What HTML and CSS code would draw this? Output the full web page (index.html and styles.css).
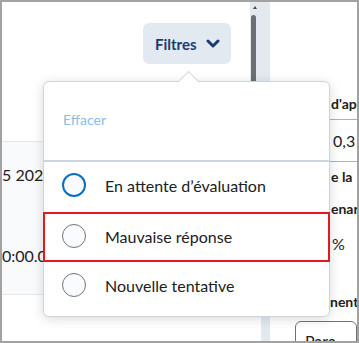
FILE: index.html
```html
<!DOCTYPE html>
<html>
<head>
  <link rel="stylesheet" href="styles.css">
</head>
<body>
  <div class="frame">
    <div class="main">
      <div class="toolbar">
        <button class="filter-btn">
          <span>Filtres</span>
          <svg width="14" height="10" viewBox="0 0 14 10"><path d="M2 2 L7 7 L12 2" fill="none" stroke="#1b3b6f" stroke-width="3" stroke-linecap="round" stroke-linejoin="round"/></svg>
        </button>
      </div>
      <div class="list">
        <div class="list-date">5 2025</div>
        <div class="list-time">0:00.000</div>
      </div>
    </div>

    <div class="scroll">
      <div class="scroll-arrow"></div>
      <div class="scroll-thumb"></div>
    </div>
    <div class="divider"></div>

    <div class="side">
      <div class="side-head">d'ap</div>
      <div class="side-value">0,3</div>
      <div class="side-label first">e la</div>
      <div class="side-label second">enar</div>
      <div class="side-pct">%</div>
      <div class="side-label third">nent</div>
      <div class="side-select">Para</div>
    </div>

    <div class="dropdown">
      <div class="pointer"></div>
      <div class="clear">Effacer</div>
      <div class="sep"></div>
      <div class="option">
        <span class="radio radio-focus"></span>
        <span>En attente d’évaluation</span>
      </div>
      <div class="option option-marked">
        <span class="radio"></span>
        <span>Mauvaise réponse</span>
      </div>
      <div class="option">
        <span class="radio"></span>
        <span>Nouvelle tentative</span>
      </div>
    </div>
  </div>
</body>
</html>
```

FILE: styles.css
```css
body {
  margin: 0;
  font-family: Lato, "Noto Sans", sans-serif;
  color: #202122;
}

.frame {
  position: relative;
  display: flex;
  width: 359px;
  height: 343px;
  box-sizing: border-box;
  border: 2px solid #a2a2a2;
  background-color: white;
  overflow: hidden;
}

.main {
  width: 248px;
  flex-shrink: 0;
}

.toolbar {
  display: flex;
  justify-content: flex-end;
  padding: 21px 19px 0 0;
}

.filter-btn {
  display: flex;
  align-items: center;
  gap: 9px;
  width: 88px;
  height: 41px;
  padding: 0 0 0 12px;
  border: none;
  border-radius: 6px;
  background-color: #e3e9f1;
  color: #1b3b6f;
  font-family: Lato, sans-serif;
  font-size: 15px;
  font-weight: bold;
}

.list {
  margin-top: 77px;
  height: 152px;
  background-color: #f9fafc;
  border-top: 1px solid #e3e7ec;
  border-bottom: 1px solid #e3e7ec;
  font-size: 16px;
  white-space: nowrap;
}

.list-date {
  padding-top: 23px;
  line-height: 20px;
}

.list-time {
  margin-top: 61px;
  line-height: 20px;
}

.scroll {
  width: 11px;
  height: 300px;
  flex-shrink: 0;
  background-color: #e4e9f0;
  padding-top: 4px;
  box-sizing: border-box;
}

.scroll-arrow {
  width: 0;
  height: 0;
  margin-left: 3px;
  border-left: 2.5px solid transparent;
  border-right: 2.5px solid transparent;
  border-bottom: 3px solid #45494d;
}

.scroll-thumb {
  width: 5px;
  height: 120px;
  margin: 6px 0 0 1px;
  border-radius: 3px;
  background-color: #6c7075;
}

.divider {
  width: 9px;
  flex-shrink: 0;
  background-color: #e4e9f0;
}

.side {
  flex: 1;
  padding-top: 92px;
  white-space: nowrap;
  overflow: hidden;
}

.side-head {
  height: 25px;
  padding-left: 61px;
  line-height: 20px;
  font-size: 14px;
  font-weight: bold;
  border-bottom: 1px solid #aab1b8;
}

.side-value {
  height: 41px;
  padding-left: 63px;
  line-height: 41px;
  font-size: 16px;
  border-bottom: 1px solid #aab1b8;
}

.side-label {
  padding-left: 61px;
  line-height: 20px;
  font-size: 14px;
  font-weight: bold;
}

.side-label.first {
  margin-top: 5px;
}

.side-label.second {
  margin-top: 12px;
}

.side-pct {
  margin-top: 15px;
  padding-left: 62px;
  line-height: 20px;
  font-size: 16px;
}

.side-label.third {
  margin-top: 38px;
  padding-left: 60px;
}

.side-select {
  margin: 9px 0 0 25px;
  height: 36px;
  padding: 9px 0 0 9px;
  box-sizing: border-box;
  border: 1px solid #6e7378;
  border-radius: 6px;
  font-size: 16px;
}

.dropdown {
  position: absolute;
  left: 41px;
  top: 79px;
  width: 287px;
  height: 236px;
  box-sizing: border-box;
  padding: 28px 0 4px;
  background-color: white;
  border: 1px solid #cdd5dc;
  border-radius: 6px;
  box-shadow: 0 2px 12px rgba(0, 0, 0, 0.15);
}

.pointer {
  position: absolute;
  left: 137px;
  top: -8px;
  width: 15px;
  height: 15px;
  box-sizing: border-box;
  background-color: white;
  border-top: 1px solid #cdd5dc;
  border-left: 1px solid #cdd5dc;
  transform: rotate(45deg);
}

.clear {
  padding-left: 19px;
  line-height: 20px;
  font-size: 14px;
  color: #8bbde9;
}

.sep {
  margin-top: 30px;
  height: 2px;
  background-color: #cdd5dc;
}

.option {
  display: flex;
  align-items: center;
  gap: 19px;
  height: 50px;
  box-sizing: border-box;
  padding: 0 0 4px 18px;
  font-size: 16px;
}

.option-marked {
  margin: 0 -1px;
  padding-left: 19px;
  border: 2px solid #e3191f;
  padding-bottom: 2px;
  padding-top: 0;
}

.option-marked .radio {
  margin-left: -2px;
}

.radio {
  width: 24px;
  height: 24px;
  box-sizing: border-box;
  border: 1px solid #6e7579;
  border-radius: 50%;
  background-color: #f9fbff;
  flex-shrink: 0;
}

.radio-focus {
  border: 2px solid #0a6fc2;
}
```
